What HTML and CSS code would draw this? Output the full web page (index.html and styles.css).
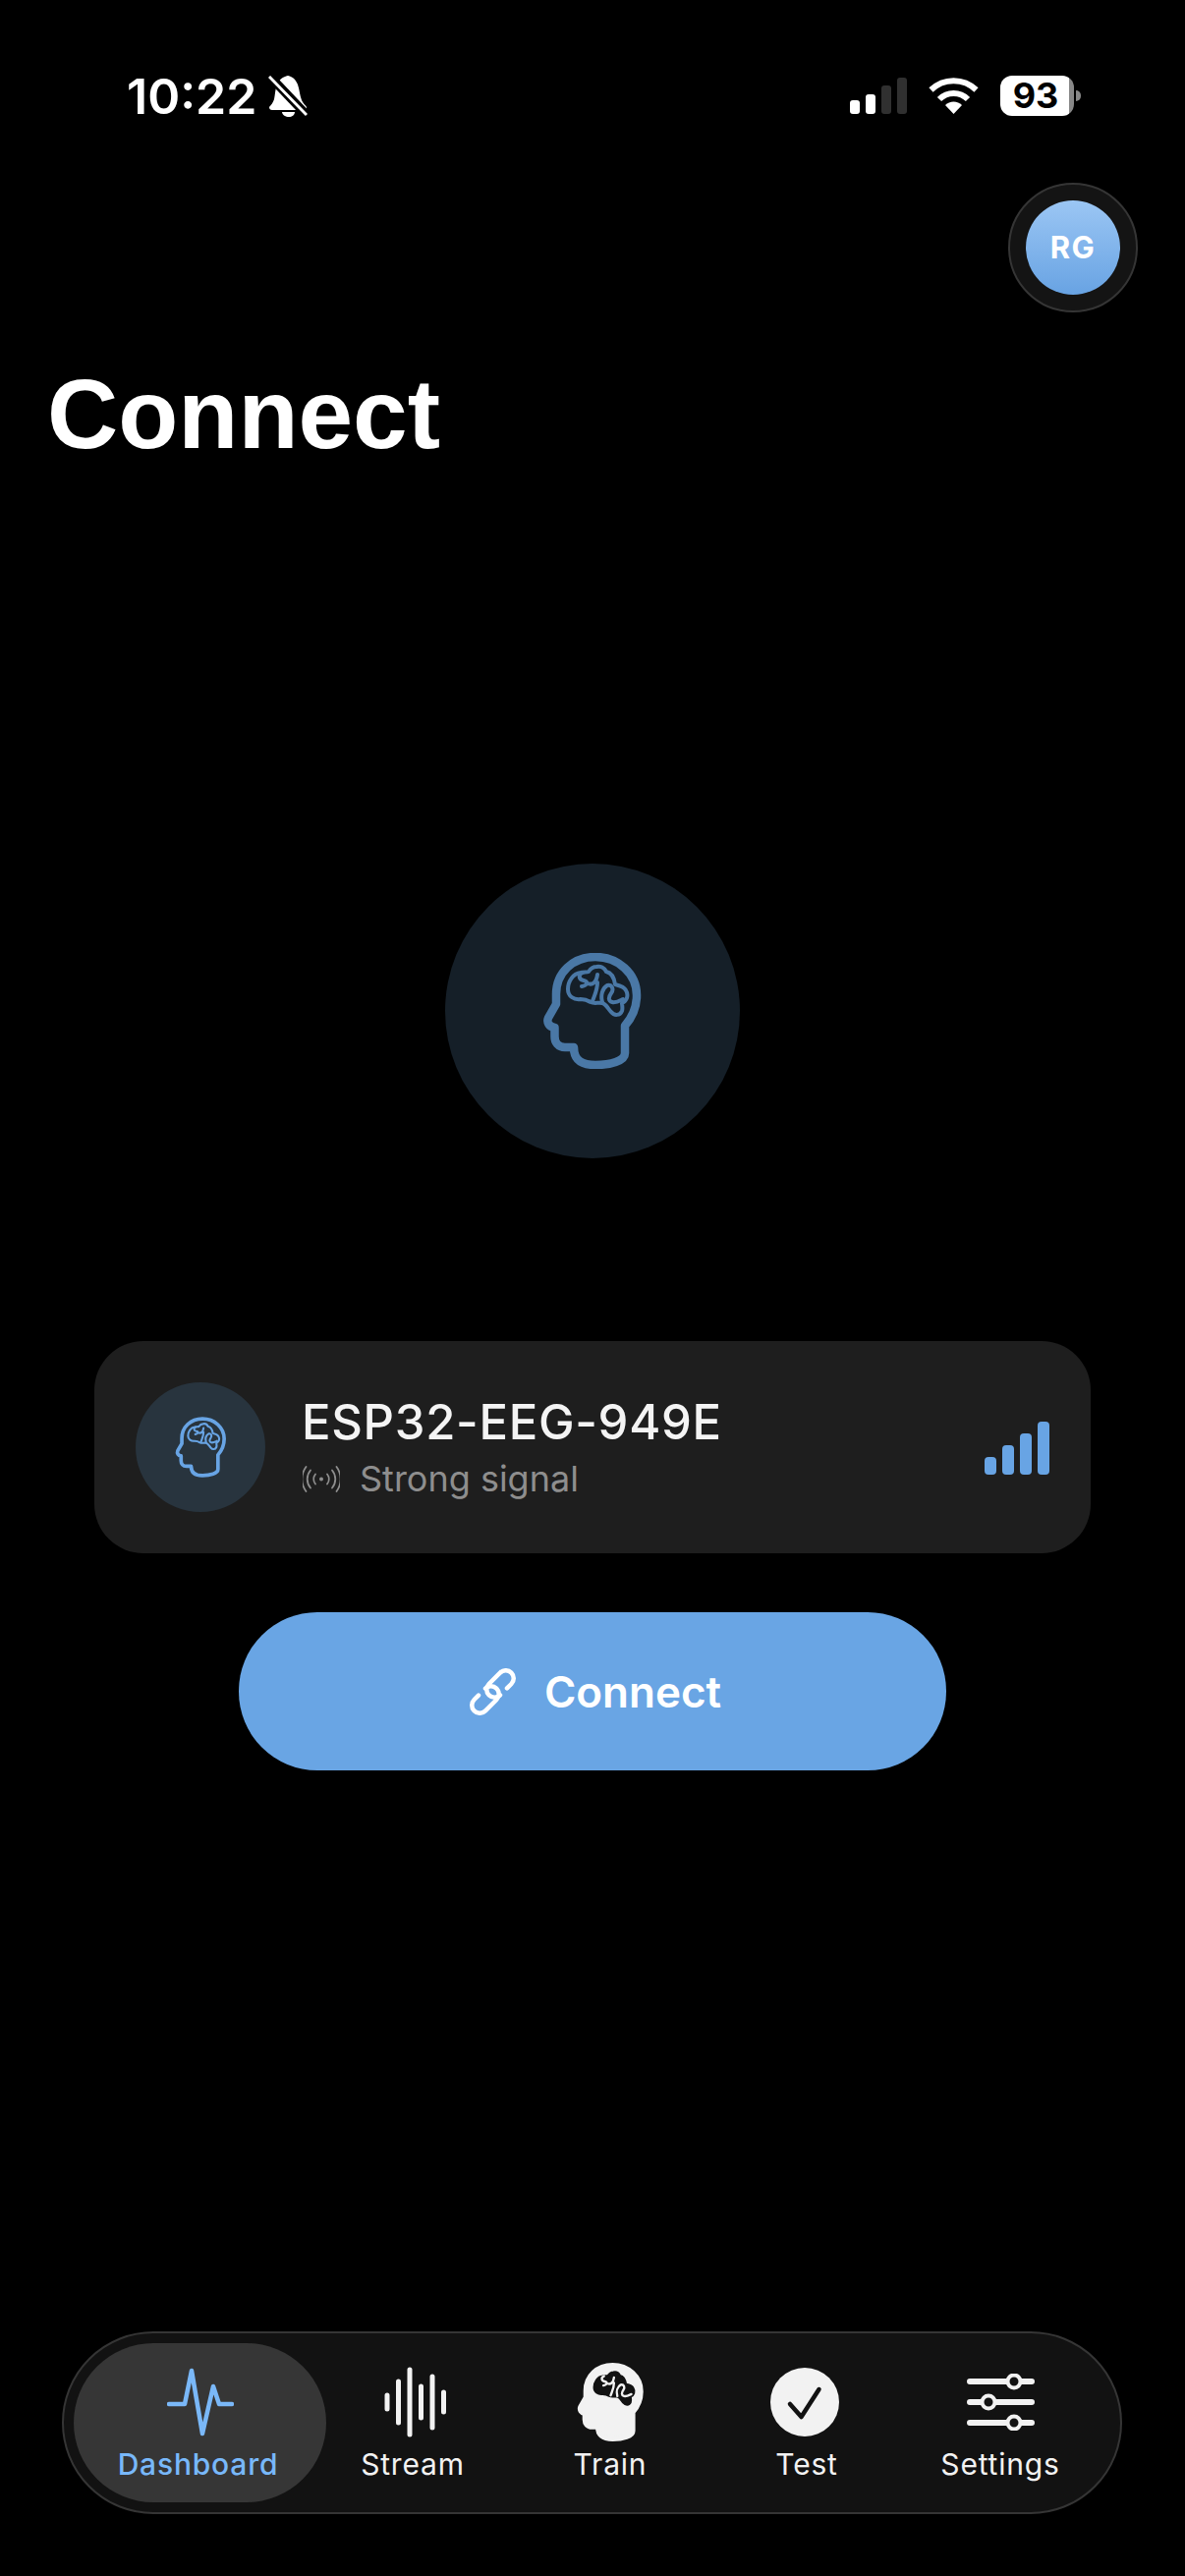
FILE: index.html
```html
<!DOCTYPE html>
<html lang="en">
<head>
  <meta charset="UTF-8">
  <meta name="viewport" content="width=device-width, initial-scale=1.0">
  <title>Connect</title>
  <link rel="stylesheet" href="styles.css">
</head>
<body>
  <!-- Shared head and brain shapes -->
  <svg class="defs" width="0" height="0" aria-hidden="true">
    <defs>
      <path id="head-shape" d="M53 4C76 4 95 21 95 43C95 56 91 65 83 74L83 102C83 110 68 114 53 114C40 114 31 110 31 96L22 96C15 96 11.5 91 11.5 85L11.5 76C6 75 3 71 5 66L13 52L13 42C13 20 30 4 53 4Z"/>
      <path id="brain-shape" d="M38 20C30 21 25 29 25 37C25 44 31 48 38 47C42 47 45 48 48 50C52 52 56 50 60 51C64 52 66 57 69 60C72 64 78 64 80 59C81 56 80 53 80 51C85 49 87 43 84 38C82 34 77 33 73 32C72 25 69 20 64 19C62 15 58 13 54 14C50 14 48 16 46 19C44 20 41 19 38 20Z"/>
      <path id="brain-folds" d="M40 20C35 22 36 27 41 28C46 29 45 33 39 34M45 31C50 33 54 30 55 22M55 30C55 38 52 43 50 49M60 50C58 43 60 36 65 33C70 32 72 37 69 41C66 45 66 49 70 50C74 51 77 49 81 47"/>
    </defs>
  </svg>

  <div class="status-bar">
    <div class="status-left">
      <span class="time">10:22</span>
      <svg class="bell" width="40" height="42" viewBox="0 0 40 42">
        <path d="M19 37H27C27 40 24 42 21 42S14 40 14 37Z" fill="#fff"/>
        <path d="M20 0C25 1 28 4 30 9C32 15 32 20 34 25C35 28 38 30 39 32C39 34 38 35 36 35H4C2 35 1 34 1 32C3 30 5 27 6 24C7 19 7 14 9 9C11 4 15 1 20 0Z" fill="#fff"/>
        <path d="M2 1L40 41" stroke="#000" stroke-width="9"/>
        <path d="M1 1L39 40" stroke="#fff" stroke-width="3"/>
      </svg>
    </div>
    <div class="status-right">
      <div class="cell-bars">
        <span class="cell one"></span>
        <span class="cell two"></span>
        <span class="cell three off"></span>
        <span class="cell four off"></span>
      </div>
      <svg class="wifi" width="51" height="37" viewBox="0 0 51 37">
        <path d="M2.5 12.5A33 33 0 0 1 48.5 12.5" fill="none" stroke="#fff" stroke-width="6"/>
        <path d="M11 22A20.5 20.5 0 0 1 40 22" fill="none" stroke="#fff" stroke-width="6"/>
        <path d="M25.5 37L17 28A12 12 0 0 1 34 28Z" fill="#fff"/>
      </svg>
      <div class="battery">
        <div class="battery-body">93</div>
        <span class="battery-nub"></span>
      </div>
    </div>
  </div>

  <div class="top-row">
    <div class="avatar-ring">
      <div class="avatar">RG</div>
    </div>
  </div>

  <h1 class="page-title">Connect</h1>

  <main>
    <div class="hero">
      <svg class="hero-icon" width="100" height="118" viewBox="0 0 100 118">
        <use href="#head-shape" class="line thick"/>
        <use href="#brain-shape" class="line"/>
        <use href="#brain-folds" class="line"/>
      </svg>
    </div>

    <section class="device-card">
      <div class="device-icon">
        <svg class="device-brain" width="53" height="62" viewBox="0 0 100 118">
          <use href="#head-shape" class="line medium"/>
          <use href="#brain-shape" class="line"/>
          <use href="#brain-folds" class="line"/>
        </svg>
      </div>
      <div class="device-info">
        <div class="device-name">ESP32-EEG-949E</div>
        <div class="device-signal">
          <svg width="38" height="27" viewBox="0 0 38 27" fill="none" stroke="#8e8e8e" stroke-width="1.8" stroke-linecap="round">
            <circle cx="19" cy="13.5" r="2" fill="#8e8e8e" stroke="none"/>
            <path d="M13 8.5A8 8 0 0 0 13 18.5M25 8.5A8 8 0 0 1 25 18.5"/>
            <path d="M8 4.5A14 14 0 0 0 8 22.5M30 4.5A14 14 0 0 1 30 22.5"/>
            <path d="M3.5 1A21 21 0 0 0 3.5 26M34.5 1A21 21 0 0 1 34.5 26"/>
          </svg>
          <span>Strong signal</span>
        </div>
      </div>
      <div class="signal-bars">
        <span class="bar b1"></span>
        <span class="bar b2"></span>
        <span class="bar b3"></span>
        <span class="bar b4"></span>
      </div>
    </section>

    <button class="connect-btn">
      <svg width="49" height="48" viewBox="0 0 49 48" fill="none" stroke="#fff" stroke-width="4.5" stroke-linecap="round">
        <path d="M39 20.4L43.4 16A8 8 0 0 0 32 4.6L20.6 16A8 8 0 0 0 32 27.3"/>
        <path d="M10 27.6L5.6 32A8 8 0 0 0 17 43.4L28.4 32A8 8 0 0 0 17 20.7"/>
      </svg>
      <span>Connect</span>
    </button>
  </main>

  <nav class="tab-bar">
    <div class="tab tab-dashboard active">
      <div class="tab-icon">
        <svg width="68" height="70" viewBox="0 0 68 70" fill="none" stroke="#7ab8f8" stroke-width="4.5" stroke-linecap="round" stroke-linejoin="round">
          <path d="M2 37H18L25 3L36 67L47 19L53 37H66"/>
        </svg>
      </div>
      <span>Dashboard</span>
    </div>
    <div class="tab tab-stream">
      <div class="tab-icon">
        <svg width="63" height="72" viewBox="0 0 63 72" fill="none" stroke="#f2f2f2" stroke-width="5" stroke-linecap="round">
          <path d="M3 29V43M14.5 15V57M26 3V69M37.5 20V52M49 10V62M60.5 26V46"/>
        </svg>
      </div>
      <span>Stream</span>
    </div>
    <div class="tab tab-train">
      <div class="tab-icon">
        <svg width="69" height="80" viewBox="0 0 100 118">
          <use href="#head-shape" class="solid"/>
          <use href="#brain-shape" class="cutout"/>
          <use href="#brain-folds" class="folds"/>
        </svg>
      </div>
      <span>Train</span>
    </div>
    <div class="tab tab-test">
      <div class="tab-icon">
        <svg width="70" height="70" viewBox="0 0 70 70">
          <circle cx="35" cy="35" r="35" fill="#f2f2f2"/>
          <path d="M20 37L31.5 50L49.5 22" fill="none" stroke="#121212" stroke-width="4.5" stroke-linecap="round" stroke-linejoin="round"/>
        </svg>
      </div>
      <span>Test</span>
    </div>
    <div class="tab tab-settings">
      <div class="tab-icon">
        <svg width="69" height="58" viewBox="0 0 69 58" fill="none" stroke="#f2f2f2" stroke-linecap="round">
          <path d="M3 8H66M3 29H66M3 50H66" stroke-width="6"/>
          <g fill="#121212" stroke-width="4">
            <circle cx="48" cy="8" r="6.5"/>
            <circle cx="22" cy="29" r="6.5"/>
            <circle cx="48" cy="50" r="6.5"/>
          </g>
        </svg>
      </div>
      <span>Settings</span>
    </div>
  </nav>
</body>
</html>
```

FILE: styles.css
```css
* {
  box-sizing: border-box;
}
html, body {
  margin: 0;
  padding: 0;
}
body {
  width: 1206px;
  height: 2622px;
  overflow: hidden;
  display: flex;
  flex-direction: column;
  background: #000;
  color: #fff;
  font-family: Inter, "Liberation Sans", sans-serif;
}
.defs {
  position: absolute;
}

/* Status bar */
.status-bar {
  height: 186px;
  padding: 77px 106px 0 129px;
  display: flex;
  justify-content: space-between;
  align-items: flex-start;
}
.status-left {
  display: flex;
  align-items: center;
  gap: 12px;
  height: 42px;
}
.time {
  font-size: 50px;
  font-weight: 600;
  line-height: 42px;
}
.status-right {
  display: flex;
  align-items: flex-start;
}
.cell-bars {
  display: flex;
  align-items: flex-end;
  gap: 6px;
  height: 37px;
  margin: 2px 22px 0 0;
}
.cell {
  width: 10px;
  background: #fff;
  border-radius: 3px;
}
.cell.off {
  background: #303030;
}
.one { height: 14px; }
.two { height: 20px; }
.three { height: 29px; }
.four { height: 37px; }
.wifi {
  margin: 2px 22px 0 0;
}
.battery {
  display: flex;
  align-items: center;
  gap: 2px;
}
.battery-body {
  width: 75px;
  height: 41px;
  border-radius: 12px;
  background: linear-gradient(to right, #fff 94%, #888 94%);
  color: #000;
  font-size: 36px;
  font-weight: 700;
  line-height: 41px;
  padding-right: 3px;
  text-align: center;
}
.battery-nub {
  width: 5px;
  height: 11px;
  border-radius: 0 5px 5px 0;
  background: #888;
}

/* Header */
.top-row {
  display: flex;
  justify-content: flex-end;
  padding-right: 48px;
}
.avatar-ring {
  width: 132px;
  height: 132px;
  padding: 16px;
  border: 2px solid #353535;
  border-radius: 50%;
  background: #141414;
}
.avatar {
  width: 96px;
  height: 96px;
  border-radius: 50%;
  background: linear-gradient(#9bc6f4, #68a3e3);
  font-size: 31px;
  font-weight: 700;
  letter-spacing: 1.5px;
  line-height: 96px;
  text-align: center;
}
.page-title {
  margin: 40px 0 0 48px;
  font-family: "Liberation Sans", Arial, sans-serif;
  font-size: 100px;
  font-weight: 700;
  line-height: 126px;
}

/* Main content */
main {
  display: flex;
  flex-direction: column;
  align-items: center;
}
.hero {
  width: 300px;
  height: 300px;
  margin-top: 395px;
  border-radius: 50%;
  background: #151f28;
  display: flex;
  align-items: center;
  justify-content: center;
}
.hero-icon {
  color: #4a78a6;
}
.line {
  fill: none;
  stroke: currentColor;
  stroke-width: 4;
  stroke-linecap: round;
  stroke-linejoin: round;
}
.line.thick {
  stroke-width: 8.5;
}
.line.medium {
  stroke-width: 7;
}
.device-card {
  width: 1014px;
  height: 216px;
  margin-top: 186px;
  padding: 0 42px;
  border-radius: 50px;
  background: #1e1e1e;
  display: flex;
  align-items: center;
}
.device-icon {
  width: 132px;
  height: 132px;
  border-radius: 50%;
  background: #28343e;
  color: #68a4e4;
  display: flex;
  align-items: center;
  justify-content: center;
}
.device-info {
  margin-left: 37px;
  flex: 1;
}
.device-name {
  font-size: 49px;
  font-weight: 500;
  letter-spacing: 0.7px;
  line-height: 58px;
  color: #f4f4f4;
}
.device-signal {
  display: flex;
  align-items: center;
  gap: 20px;
  margin-top: 6px;
  font-size: 36px;
  line-height: 44px;
  color: #8e8e8e;
}
.device-signal svg {
  margin-left: 1px;
}
.signal-bars {
  display: flex;
  align-items: flex-end;
  gap: 6px;
  height: 54px;
  margin-bottom: -1px;
}
.bar {
  width: 12px;
  background: #68a4e4;
  border-radius: 4px;
}
.b1 { height: 18px; }
.b2 { height: 30px; }
.b3 { height: 42px; }
.b4 { height: 54px; }
.connect-btn {
  width: 720px;
  height: 161px;
  margin-top: 60px;
  padding: 0 0 0 5px;
  border: 0;
  border-radius: 80px;
  background: #69a5e4;
  color: #fff;
  font-family: inherit;
  font-size: 44px;
  font-weight: 600;
  display: flex;
  align-items: center;
  justify-content: center;
  gap: 28px;
}

/* Bottom tabs */
.tab-bar {
  width: 1079px;
  height: 186px;
  margin: auto 0 63px 63px;
  padding: 10px 0 0 10px;
  border: 2px solid #353535;
  border-radius: 93px;
  background: #121212;
  display: flex;
}
.tab {
  height: 162px;
  padding-top: 19px;
  border-radius: 81px;
  display: flex;
  flex-direction: column;
  align-items: center;
  font-size: 30px;
  letter-spacing: 0.8px;
  line-height: 36px;
  color: #f2f2f2;
}
.tab.active {
  background: #363636;
  color: #78b8fa;
  font-weight: 500;
}
.tab-icon {
  height: 81px;
  margin-bottom: 5px;
  display: flex;
  align-items: center;
}
.tab-dashboard { width: 257px; }
.tab-dashboard span { margin-right: 4px; }
.tab-stream { width: 174px; }
.tab-stream .tab-icon { margin-left: 6px; }
.tab-stream span { margin-left: 2px; }
.tab-train { width: 230px; }
.tab-test { width: 170px; }
.tab-test .tab-icon { margin-right: 4px; }
.tab-settings { width: 224px; }
.solid {
  fill: #f2f2f2;
  stroke: #f2f2f2;
  stroke-width: 8;
  stroke-linejoin: round;
}
.cutout {
  fill: #121212;
  stroke: #121212;
  stroke-width: 3;
}
.folds {
  fill: none;
  stroke: #f2f2f2;
  stroke-width: 3.5;
  stroke-linecap: round;
}
```
